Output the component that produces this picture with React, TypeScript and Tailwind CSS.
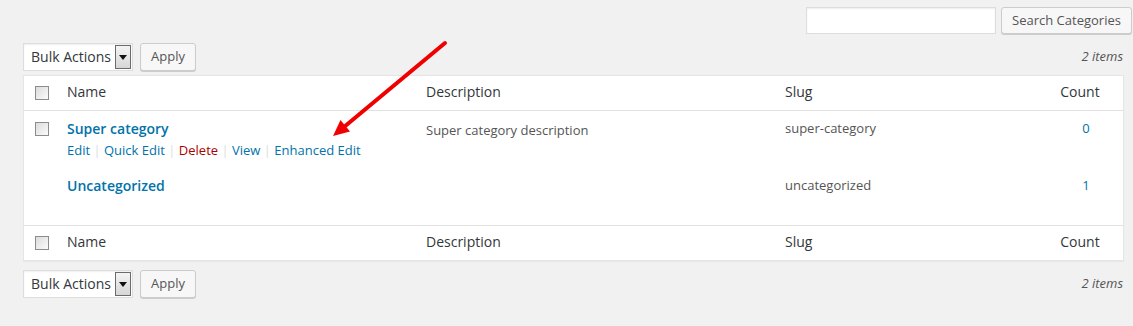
import React from 'react';

function Checkbox() {
  return (
    <span className="block w-[14px] h-[14px] border border-[#8c8c8c] bg-gradient-to-br from-[#dcdcdc] to-[#fbfbfb]" />
  );
}

function BulkActions() {
  return (
    <div className="flex items-center gap-[7px]">
      <div className="flex h-[28px] w-[110px] items-stretch border border-[#dddddd] bg-white shadow-[inset_0_1px_2px_rgba(0,0,0,0.07)]">
        <span className="flex-1 pl-[7px] text-[14px] leading-[26px] text-[#32373c]">Bulk Actions</span>
        <span className="my-[1px] mr-[1px] flex w-[16px] items-center justify-center border border-[#6b6b6b] bg-gradient-to-b from-[#f4f4f4] to-[#d6d6d6]">
          <svg width="8" height="5" viewBox="0 0 8 5">
            <path d="M0 0 L8 0 L4 5 Z" fill="#111" />
          </svg>
        </span>
      </div>
      <button className="h-[28px] w-[56px] rounded-[3px] border border-[#cccccc] bg-[#f7f7f7] text-[13px] text-[#555555] shadow-[0_1px_0_#cccccc]">
        Apply
      </button>
    </div>
  );
}

function HeaderRow({ top }: { top?: boolean }) {
  return (
    <div className={`flex h-[35px] items-center pb-[3px] text-[14px] text-[#32373c] ${top ? 'border-b' : 'border-t'} border-[#e1e1e1]`}>
      <div className="w-[33px] pl-[11px] pt-[2px]">
        <Checkbox />
      </div>
      <div className="w-[359px] px-[10px]">Name</div>
      <div className="w-[359px] px-[10px]">Description</div>
      <div className="w-[274px] px-[10px]">Slug</div>
      <div className="w-[74px] pr-[12px] text-center">Count</div>
    </div>
  );
}

const rows = [
  { name: 'Super category', desc: 'Super category description', slug: 'super-category', count: '0', main: true },
  { name: 'Uncategorized', desc: '', slug: 'uncategorized', count: '1', main: false },
];

export default function App() {
  return (
    <div className="relative h-[326px] w-[1133px] overflow-hidden bg-[#f1f1f1] pl-[23px] pr-[9px] pt-[7px] font-['Open_Sans',sans-serif]">
      <div className="-mr-[8px] flex justify-end gap-[5px]">
        <div className="h-[27px] w-[190px] border border-[#dddddd] bg-white shadow-[inset_0_1px_2px_rgba(0,0,0,0.07)]" />
        <button className="h-[27px] w-[131px] rounded-[3px] border border-[#cccccc] bg-[#f7f7f7] text-[13px] text-[#555555] shadow-[0_1px_0_#cccccc]">
          Search Categories
        </button>
      </div>

      <div className="mt-[9px] flex items-center justify-between">
        <BulkActions />
        <span className="pr-[1px] text-[13px] italic text-[#555555]">2 items</span>
      </div>

      <div className="mt-[4px] border border-[#e5e5e5] bg-white shadow-[0_1px_1px_rgba(0,0,0,0.04)]">
        <HeaderRow top />
        {rows.map((r) => (
          <div key={r.slug} className="flex h-[57px] pt-[7px] text-[13px] text-[#555555]">
            <div className="w-[33px] pl-[11px] pt-[4px]">{r.main && <Checkbox />}</div>
            <div className="w-[359px] px-[10px]">
              <div className="text-[14px] font-semibold leading-[21px] text-[#0073aa]">{r.name}</div>
              {r.main && (
                <div className="pt-[2px] text-[13px] leading-[19.5px] text-[#dddddd]">
                  <span className="text-[#0073aa]">Edit</span> | <span className="text-[#0073aa]">Quick Edit</span> |{' '}
                  <span className="text-[#aa0000]">Delete</span> | <span className="text-[#0073aa]">View</span> |{' '}
                  <span className="text-[#0073aa]">Enhanced Edit</span>
                </div>
              )}
            </div>
            <div className="w-[359px] px-[10px] pt-[2px] leading-[21px]">{r.desc}</div>
            <div className="w-[274px] px-[10px] leading-[21px]">{r.slug}</div>
            <div className="w-[74px] text-center leading-[21px] text-[#0073aa]">{r.count}</div>
          </div>
        ))}
        <HeaderRow />
      </div>

      <div className="mt-[9px] flex items-center justify-between">
        <BulkActions />
        <span className="pr-[1px] text-[13px] italic text-[#555555]">2 items</span>
      </div>

      <svg className="pointer-events-none absolute left-0 top-0" width="1133" height="326">
        <line x1="445" y1="43" x2="344" y2="127" stroke="#f00000" strokeWidth="4" strokeLinecap="round" />
        <polygon points="333,136 350,131.5 340.5,120" fill="#f00000" />
      </svg>
    </div>
  );
}
